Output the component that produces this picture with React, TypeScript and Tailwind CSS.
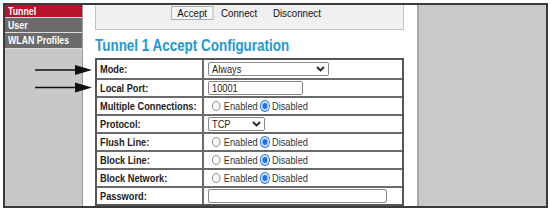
import React from "react";

const rows: { label: string; kind: string }[] = [
  { label: "Mode:", kind: "mode" },
  { label: "Local Port:", kind: "port" },
  { label: "Multiple Connections:", kind: "radio" },
  { label: "Protocol:", kind: "proto" },
  { label: "Flush Line:", kind: "radio" },
  { label: "Block Line:", kind: "radio" },
  { label: "Block Network:", kind: "radio" },
  { label: "Password:", kind: "pass" },
];

// the screenshot is squeezed sideways, so text gets narrowed the same way
function Narrow({ children, className = "" }: { children: React.ReactNode; className?: string }) {
  return <span className={`inline-block origin-left scale-x-[0.84] whitespace-nowrap ${className}`}>{children}</span>;
}

function Radio({ on }: { on?: boolean }) {
  return on ? (
    <span className="inline-block w-[10px] h-[10px] rounded-full bg-[#1a73e8] border-[2px] border-[#cfe3fb] ring-1 ring-[#1a73e8]" />
  ) : (
    <span className="inline-block w-[10px] h-[10px] rounded-full bg-white border border-[#777]" />
  );
}

function Chevron() {
  return (
    <svg width="9" height="6" viewBox="0 0 9 6" className="mr-[3px]">
      <path d="M1 1 L4.5 4.5 L8 1" fill="none" stroke="#222" strokeWidth="1.8" />
    </svg>
  );
}

function Field({ kind }: { kind: string }) {
  if (kind === "mode")
    return (
      <div className="w-[121px] h-[14px] border border-[#888] rounded-[2px] flex items-center justify-between pl-[3px]">
        <Narrow>Always</Narrow>
        <Chevron />
      </div>
    );
  if (kind === "port")
    return (
      <div className="w-[95px] h-[14px] border border-[#888] rounded-[2px] flex items-center pl-[3px]">
        <Narrow>10001</Narrow>
      </div>
    );
  if (kind === "proto")
    return (
      <div className="w-[57px] h-[14px] border border-[#888] rounded-[2px] flex items-center justify-between pl-[3px]">
        <Narrow>TCP</Narrow>
        <Chevron />
      </div>
    );
  if (kind === "pass")
    return <div className="w-[179px] h-[14px] border border-[#888] rounded-[2px]" />;
  return (
    <div className="ml-[4px] flex items-center gap-[4px] text-[#333] origin-left scale-x-[0.84] whitespace-nowrap">
      <Radio />
      <span>Enabled</span>
      <Radio on />
      <span className="-ml-[1px]">Disabled</span>
    </div>
  );
}

export default function App() {
  return (
    <div className="w-[550px] h-[212px] bg-white relative overflow-hidden" style={{ fontFamily: '"Liberation Sans", Arial, sans-serif' }}>
      <div className="absolute left-[3px] top-[3px] w-[545px] h-[205px] border-2 border-[#3a3a3a] flex">
        {/* Sidebar */}
        <div className="w-[78px] bg-[#c8c8c8] border-r border-[#9a9a9a] flex flex-col text-white text-[10px] font-bold">
          <div className="h-[13px] bg-[#b5132b] pl-[3px] leading-[13px] border-b border-[#ddd]">
            <Narrow className="scale-x-[0.88]">Tunnel</Narrow>
          </div>
          <div className="h-[15px] bg-[#6b6b6b] pl-[3px] leading-[15px] border-b border-[#ddd]">
            <Narrow className="scale-x-[0.88]">User</Narrow>
          </div>
          <div className="h-[16px] bg-[#6b6b6b] pl-[3px] leading-[16px] border-b border-[#ddd]">
            <Narrow className="scale-x-[0.88]">WLAN Profiles</Narrow>
          </div>
        </div>

        {/* Main */}
        <div className="w-[334px] bg-white pl-[12px] flex flex-col">
          <div className="w-[309px] h-[26px] bg-[#f0f0f0] border border-t-0 border-[#c4c4c4] flex items-start justify-center pr-[7px] pt-[1px] text-[11px] text-[#111]">
            <div className="flex items-start scale-x-[0.88] whitespace-nowrap">
              <span className="border border-[#aaa] bg-[#f7f7f7] px-[6px] h-[14px] leading-[13px]">Accept</span>
              <span className="ml-[9px] leading-[15px]">Connect</span>
              <span className="ml-[18px] leading-[15px]">Disconnect</span>
            </div>
          </div>
          <div className="mt-[6px] h-[24px] text-[16px] font-bold text-[#1e98d4] leading-[20px]">
            <Narrow>Tunnel 1 Accept Configuration</Narrow>
          </div>
          <div className="w-[309px] border-2 border-[#555] flex flex-col text-[11px]">
            {rows.map((r, i) => (
              <div key={r.label} className={`flex h-[18px] ${i > 0 ? "border-t-2 border-[#6a6a6a]" : ""}`}>
                <div className="w-[107px] border-r-2 border-[#6a6a6a] pl-[3px] flex items-center font-bold text-[#222]">
                  <Narrow>{r.label}</Narrow>
                </div>
                <div className="flex-1 pl-[4px] flex items-center text-[#222]">
                  <Field kind={r.kind} />
                </div>
              </div>
            ))}
          </div>
        </div>

        {/* Right panel */}
        <div className="flex-1 bg-[#c9c9c9] border-l-2 border-[#a8a8a8]" />
      </div>

      {/* Annotation arrows */}
      <svg className="absolute left-[33px] top-[64px]" width="60" height="30" viewBox="0 0 60 30">
        <line x1="2" y1="6" x2="46" y2="6" stroke="#111" strokeWidth="1.5" />
        <polygon points="42,1 59,6 42,11" fill="#111" />
        <line x1="2" y1="23.5" x2="46" y2="23.5" stroke="#111" strokeWidth="1.5" />
        <polygon points="42,18.5 59,23.5 42,28.5" fill="#111" />
      </svg>
    </div>
  );
}
